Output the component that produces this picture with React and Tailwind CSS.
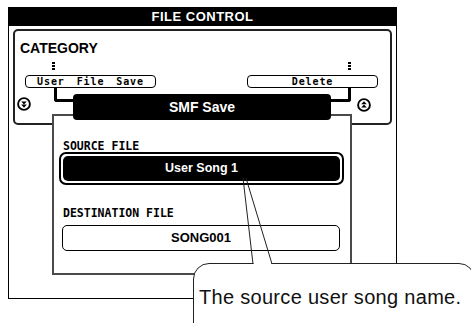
import React from "react";

const mono = { fontFamily: '"DejaVu Sans Mono", "Liberation Mono", monospace' };

function Marker() {
  // little three-bar tick above the category buttons
  return (
    <div className="flex flex-col gap-[1px] w-[3px]">
      <div className="h-[2px] bg-black" />
      <div className="h-[2px] bg-black" />
      <div className="h-[2px] bg-black" />
    </div>
  );
}

function ScrollIcon({ up = false }) {
  return (
    <svg width="14" height="14" viewBox="0 0 14 14" className="block">
      <circle cx="7" cy="7" r="5.9" fill="none" stroke="black" strokeWidth="1.9" />
      {up ? (
        <>
          <path d="M7 3.2 L9.8 6.2 L4.2 6.2 Z" fill="black" />
          <path d="M7 6.4 L9.8 9.6 L4.2 9.6 Z" fill="black" />
        </>
      ) : (
        <>
          <path d="M4.2 4.4 L9.8 4.4 L7 7.4 Z" fill="black" />
          <path d="M4.2 7.6 L9.8 7.6 L7 10.8 Z" fill="black" />
        </>
      )}
    </svg>
  );
}

export default function App() {
  return (
    <div
      className="relative w-[471px] h-[323px] overflow-hidden bg-white text-black"
      style={{ fontFamily: '"Liberation Sans", Arial, sans-serif' }}
    >
      <div className="pt-[7px] pl-[8px]">
        {/* outer screen frame */}
        <div className="w-[389px] h-[292px] border border-black">
          <div className="h-[18px] bg-black text-white font-bold text-[13px] leading-[18px] tracking-[0.5px] text-center">
            FILE CONTROL
          </div>

          {/* category box */}
          <div className="ml-[4px] mt-[3px] w-[379px] h-[96px] border-2 border-[#222] rounded-[5px]">
            <div className="ml-[5px] mt-[9px] h-[16px] leading-[16px] text-[14px] font-bold">
              CATEGORY
            </div>
            <div className="mt-[6px] flex justify-between pl-[37px] pr-[39px]">
              <Marker />
              <Marker />
            </div>
            <div className="mt-[5px] flex justify-between pl-[10px] pr-[12px]">
              <div
                className="w-[131px] h-[13px] border-[1.5px] border-black rounded-[4px] flex items-center justify-center font-bold text-[10px] leading-[10px] tracking-[0.9px]"
                style={{ ...mono, wordSpacing: "5px" }}
              >
                User File Save
              </div>
              <div
                className="w-[131px] h-[13px] border-[1.5px] border-black rounded-[4px] flex items-center justify-center font-bold text-[10px] leading-[10px] tracking-[0.9px]"
                style={mono}
              >
                Delete
              </div>
            </div>
            <div className="flex items-start">
              <div className="ml-[2px] mt-[9px]">
                <ScrollIcon />
              </div>
              <div className="ml-[23px] w-[21px] h-[14px] border-l-[3px] border-b-[3px] border-black rounded-bl-[3px]" />
              <div className="flex-1" />
              <div className="w-[21px] h-[14px] border-r-[3px] border-b-[3px] border-black rounded-br-[3px]" />
              <div className="ml-[6px] mt-[10px] mr-[19px]">
                <ScrollIcon up />
              </div>
            </div>
          </div>

          {/* SMF Save panel */}
          <div className="relative z-10 ml-[43px] -mt-[31px] w-[300px]">
            <div className="relative z-10 mx-[21px] h-[26px] bg-black rounded-[4px] text-white font-bold text-[14px] flex items-center justify-center">
              SMF Save
            </div>
            <div className="-mt-[6px] h-[161px] border-2 border-[#4a4a4a] bg-white">
              <div
                className="pt-[24px] pl-[9px] font-bold text-[11.5px] leading-[12px]"
                style={mono}
              >
                SOURCE FILE
              </div>
              <div className="ml-[5px] w-[285px] h-[33px] border-2 border-black rounded-[7px] bg-white p-[2px]">
                <div className="h-full bg-black rounded-[5px] flex items-center justify-center text-white font-bold text-[12.5px]">
                  User Song 1
                </div>
              </div>
              <div
                className="mt-[22px] pl-[9px] font-bold text-[11.5px] leading-[12px]"
                style={mono}
              >
                DESTINATION FILE
              </div>
              <div className="mt-[6px] ml-[8px] w-[278px] h-[26px] border-[1.5px] border-black rounded-[5px] flex items-center justify-center font-bold text-[13px]">
                SONG001
              </div>
            </div>
          </div>
        </div>
      </div>

      {/* callout */}
      <div className="absolute z-20 left-[193px] top-[263px] w-[282px] h-[100px] border border-[#222] rounded-[16px] bg-white pt-[21px] pl-[5px]">
        <div className="text-[20px] leading-[24px] tracking-[0.3px] text-[#111]">
          The source user song name.
        </div>
      </div>
      <svg className="absolute inset-0 z-30 pointer-events-none" width="471" height="323">
        <rect x="253.5" y="261" width="18" height="4" fill="white" />
        <line x1="243" y1="178" x2="253" y2="264" stroke="#222" strokeWidth="1" />
        <line x1="246" y1="178" x2="272" y2="264" stroke="#222" strokeWidth="1" />
      </svg>
    </div>
  );
}
